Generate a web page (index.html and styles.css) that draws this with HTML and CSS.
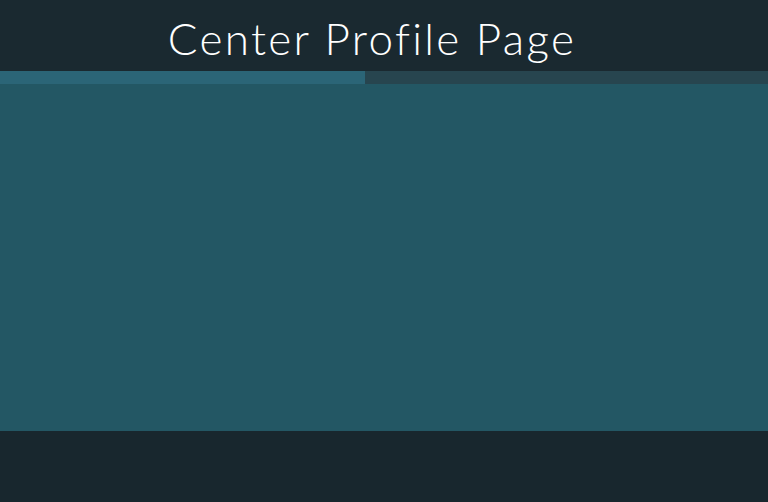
FILE: index.html
```html
<!DOCTYPE html>
<html>
<head>
<meta charset="utf-8">
<link rel="stylesheet" href="styles.css">
</head>
<body>
<div class="page">
  <header class="header">
    <h1 class="title">Center Profile Page</h1>
  </header>
  <div class="progress">
    <div class="progress-fill" style="width: 365px"></div>
  </div>
  <main class="content"></main>
  <footer class="footer"></footer>
</div>
</body>
</html>
```
FILE: styles.css
```css
html, body {
  margin: 0;
  padding: 0;
}
body {
  width: 768px;
  height: 502px;
  overflow: hidden;
  font-family: "Lato", "DejaVu Sans", sans-serif;
}
.page {
  display: flex;
  flex-direction: column;
  height: 502px;
}
.header {
  height: 71px;
  background: #1a2930;
  display: flex;
  justify-content: center;
  align-items: flex-start;
}
.title {
  margin: 0;
  padding: 12px 24px 0 0;
  color: #ffffff;
  font-weight: 300;
  font-size: 44px;
  line-height: 52px;
  letter-spacing: 2.3px;
}
.progress {
  height: 13px;
  background: #27454f;
  display: flex;
}
.progress-fill {
  background: #2b6577;
  height: 100%;
}
.content {
  height: 347px;
  background: #235764;
}
.footer {
  flex: 1;
  background: #18272e;
}
```
